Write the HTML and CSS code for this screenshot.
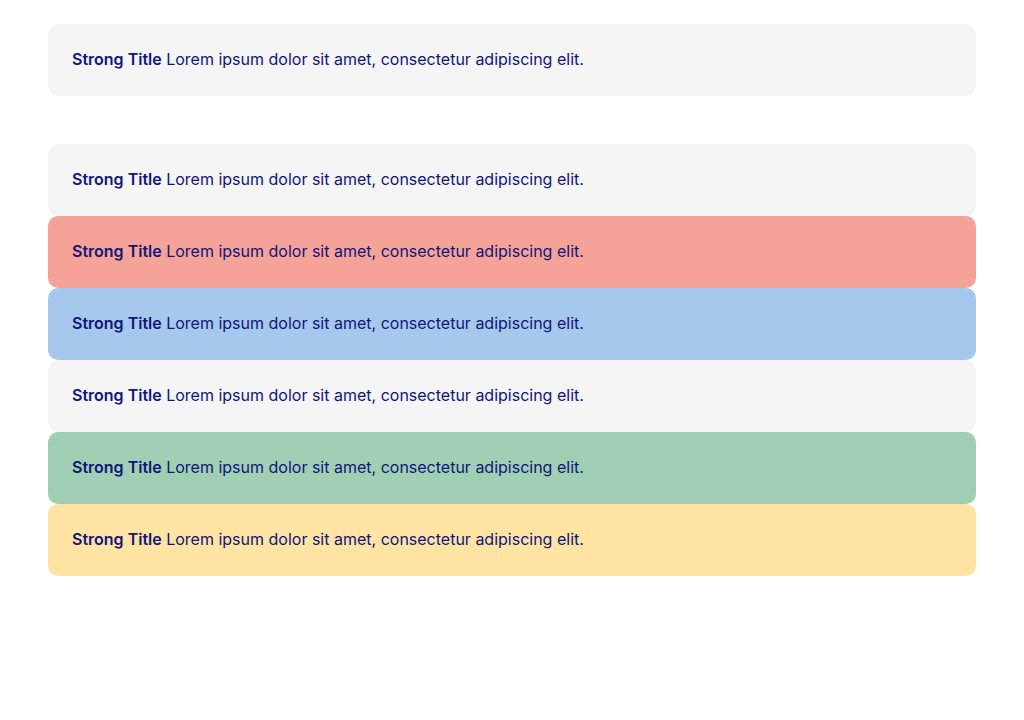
FILE: index.html
```html
<!DOCTYPE html>
<html>
<head>
<meta charset="utf-8">
<link rel="stylesheet" href="styles.css">
</head>
<body>
<div class="page">
  <div class="alert alert-default"><strong>Strong Title</strong> Lorem ipsum dolor sit amet, consectetur adipiscing elit.</div>
  <div class="group">
    <div class="alert alert-default"><strong>Strong Title</strong> Lorem ipsum dolor sit amet, consectetur adipiscing elit.</div>
    <div class="alert alert-danger"><strong>Strong Title</strong> Lorem ipsum dolor sit amet, consectetur adipiscing elit.</div>
    <div class="alert alert-info"><strong>Strong Title</strong> Lorem ipsum dolor sit amet, consectetur adipiscing elit.</div>
    <div class="alert alert-default"><strong>Strong Title</strong> Lorem ipsum dolor sit amet, consectetur adipiscing elit.</div>
    <div class="alert alert-success"><strong>Strong Title</strong> Lorem ipsum dolor sit amet, consectetur adipiscing elit.</div>
    <div class="alert alert-warning"><strong>Strong Title</strong> Lorem ipsum dolor sit amet, consectetur adipiscing elit.</div>
  </div>
</div>
</body>
</html>
```
FILE: styles.css
```css
html, body { margin: 0; padding: 0; background: #fff; }
body { font-family: Inter, "Noto Sans", sans-serif; color: #10167a; }
.page { padding: 24px 48px; display: flex; flex-direction: column; gap: 48px; }
.group { display: flex; flex-direction: column; }
.alert {
  height: 72px;
  box-sizing: border-box;
  padding: 0 24px 2px;
  display: flex;
  align-items: center;
  border-radius: 10px;
  font-size: 16px;
  white-space: pre;
}
.alert strong { font-weight: 600; }
.alert-default { background: #f5f5f5; }
.alert-danger { background: #f5a398; }
.alert-info { background: #a6c8ec; }
.alert-success { background: #a1cfb3; }
.alert-warning { background: #ffe4a4; }
```
